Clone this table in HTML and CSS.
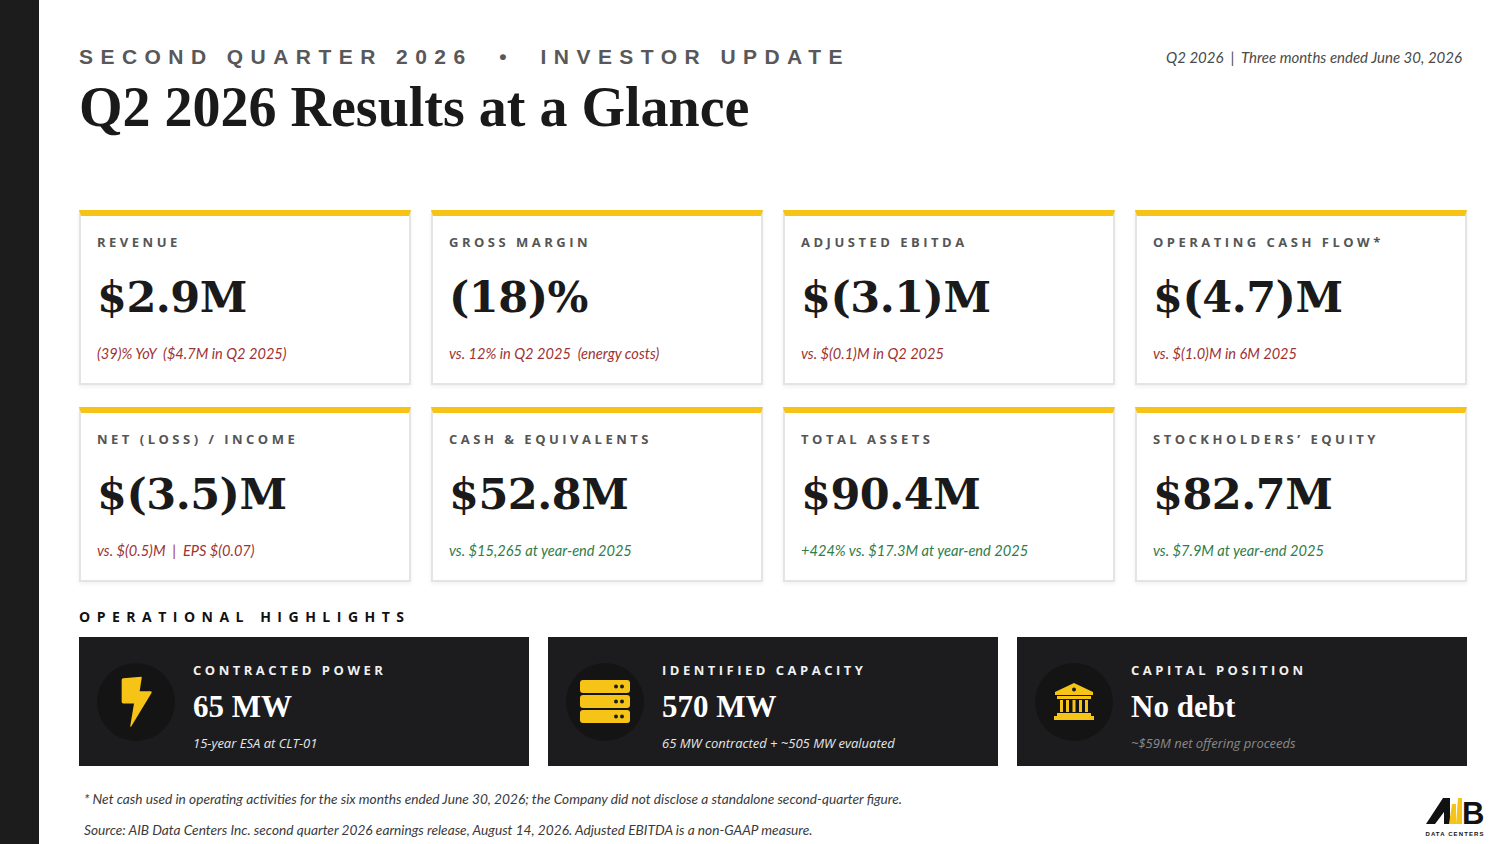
FILE: index.html
```html
<!DOCTYPE html>
<html lang="en">
<head>
<meta charset="utf-8">
<title>Q2 2026 Results at a Glance</title>
<link rel="stylesheet" href="styles.css">
</head>
<body>
<div class="slide">
  <aside class="rail"></aside>
  <main class="content">
    <header class="top">
      <div class="titles">
        <div class="kicker">SECOND QUARTER 2026 &nbsp;•&nbsp; INVESTOR UPDATE</div>
        <h1 class="title">Q2 2026 Results at a Glance</h1>
      </div>
      <div class="period">Q2 2026 &nbsp;|&nbsp; Three months ended June 30, 2026</div>
    </header>

    <section class="metrics">
      <div class="card">
        <div class="label">REVENUE</div>
        <div class="value">$2.9M</div>
        <div class="sub neg">(39)% YoY &nbsp;($4.7M in Q2 2025)</div>
      </div>
      <div class="card">
        <div class="label">GROSS MARGIN</div>
        <div class="value">(18)%</div>
        <div class="sub neg">vs. 12% in Q2 2025 &nbsp;(energy costs)</div>
      </div>
      <div class="card">
        <div class="label">ADJUSTED EBITDA</div>
        <div class="value">$(3.1)M</div>
        <div class="sub neg">vs. $(0.1)M in Q2 2025</div>
      </div>
      <div class="card">
        <div class="label">OPERATING CASH FLOW*</div>
        <div class="value">$(4.7)M</div>
        <div class="sub neg">vs. $(1.0)M in 6M 2025</div>
      </div>
      <div class="card">
        <div class="label">NET (LOSS) / INCOME</div>
        <div class="value">$(3.5)M</div>
        <div class="sub neg">vs. $(0.5)M &nbsp;| &nbsp;EPS $(0.07)</div>
      </div>
      <div class="card">
        <div class="label">CASH &amp; EQUIVALENTS</div>
        <div class="value">$52.8M</div>
        <div class="sub pos">vs. $15,265 at year-end 2025</div>
      </div>
      <div class="card">
        <div class="label">TOTAL ASSETS</div>
        <div class="value">$90.4M</div>
        <div class="sub pos">+424% vs. $17.3M at year-end 2025</div>
      </div>
      <div class="card">
        <div class="label">STOCKHOLDERS’ EQUITY</div>
        <div class="value">$82.7M</div>
        <div class="sub pos">vs. $7.9M at year-end 2025</div>
      </div>
    </section>

    <h2 class="section-title">OPERATIONAL HIGHLIGHTS</h2>

    <section class="highlights">
      <div class="hl">
        <div class="hl-icon">
          <svg width="32" height="52" viewBox="0 0 96 155" aria-hidden="true">
            <path d="M10 6 L63 2 Q66 2 65 6 L59 45 L92 45 Q97 46 94 51 L34 150 Q30 155 31 148 L42 82 L10 82 Q5 82 5 77 L5 11 Q5 6 10 6 Z" fill="#f6c417"/>
          </svg>
        </div>
        <div class="hl-text">
          <div class="hl-label">CONTRACTED POWER</div>
          <div class="hl-value">65 MW</div>
          <div class="hl-sub">15-year ESA at CLT-01</div>
        </div>
      </div>
      <div class="hl">
        <div class="hl-icon">
          <svg width="50" height="43" viewBox="0 0 50 43" aria-hidden="true">
            <rect x="0" y="0" width="50" height="13" rx="3" fill="#f6c417"/>
            <rect x="0" y="15" width="50" height="13" rx="3" fill="#f6c417"/>
            <rect x="0" y="30" width="50" height="13" rx="3" fill="#f6c417"/>
            <circle cx="36" cy="6.5" r="2" fill="#1c1c1e"/><circle cx="42" cy="6.5" r="2" fill="#1c1c1e"/>
            <circle cx="36" cy="21.5" r="2" fill="#1c1c1e"/><circle cx="42" cy="21.5" r="2" fill="#1c1c1e"/>
            <circle cx="36" cy="36.5" r="2" fill="#1c1c1e"/><circle cx="42" cy="36.5" r="2" fill="#1c1c1e"/>
          </svg>
        </div>
        <div class="hl-text">
          <div class="hl-label">IDENTIFIED CAPACITY</div>
          <div class="hl-value">570 MW</div>
          <div class="hl-sub">65 MW contracted + ~505 MW evaluated</div>
        </div>
      </div>
      <div class="hl">
        <div class="hl-icon">
          <svg width="40" height="37" viewBox="0 0 40 37" aria-hidden="true">
            <path d="M20 0 L39 9 L39 12 L1 12 L1 9 Z" fill="#f6c417"/>
            <circle cx="20" cy="6.5" r="2" fill="#1c1c1e"/>
            <rect x="3" y="13" width="34" height="3" fill="#f6c417"/>
            <rect x="6" y="17" width="3" height="12" fill="#f6c417"/>
            <rect x="12" y="17" width="3" height="12" fill="#f6c417"/>
            <rect x="18.5" y="17" width="3" height="12" fill="#f6c417"/>
            <rect x="25" y="17" width="3" height="12" fill="#f6c417"/>
            <rect x="31" y="17" width="3" height="12" fill="#f6c417"/>
            <rect x="3" y="30" width="34" height="3" fill="#f6c417"/>
            <rect x="0" y="33" width="40" height="4" fill="#f6c417"/>
          </svg>
        </div>
        <div class="hl-text">
          <div class="hl-label">CAPITAL POSITION</div>
          <div class="hl-value">No debt</div>
          <div class="hl-sub muted">~$59M net offering proceeds</div>
        </div>
      </div>
    </section>

    <footer class="notes">
      <div class="note-text">
        <p>* Net cash used in operating activities for the six months ended June 30, 2026; the Company did not disclose a standalone second-quarter figure.</p>
        <p>Source: AIB Data Centers Inc. second quarter 2026 earnings release, August 14, 2026. Adjusted EBITDA is a non-GAAP measure.</p>
      </div>
      <div class="logo">
        <svg width="64" height="42" viewBox="0 0 64 42" aria-hidden="true">
          <polygon points="4,29 21,3 28,3 28,29 22,29 22,17 13,29" fill="#111"/>
          <polygon points="30,9 34,9 34,29 27,29" fill="#f6c417"/>
          <polygon points="36,3 40,3 40,29 34,29" fill="#f6c417"/>
          <text x="40" y="29" class="logo-b">B</text>
          <text x="33" y="41" class="logo-sub" text-anchor="middle">DATA CENTERS</text>
        </svg>
      </div>
    </footer>
  </main>
</div>
</body>
</html>
```

FILE: styles.css
```css
* { box-sizing: border-box; }
html, body { margin: 0; padding: 0; }
body { background: #ffffff; color: #1a1a1a; }

.slide {
  width: 1500px;
  height: 844px;
  display: flex;
  overflow: hidden;
  background: #ffffff;
}

.rail {
  width: 39px;
  flex: 0 0 39px;
  background: #1c1c1c;
}

.content {
  flex: 1;
  padding: 42px 33px 0 40px;
  display: flex;
  flex-direction: column;
}

.top {
  display: flex;
  justify-content: space-between;
  align-items: flex-start;
  height: 168px;
  flex: 0 0 168px;
}

.kicker {
  font-family: "Liberation Sans", Arial, sans-serif;
  font-weight: 700;
  font-size: 21px;
  line-height: 30px;
  letter-spacing: 7.45px;
  color: #58585a;
}

.title {
  margin: 4px 0 0 0;
  font-family: "Liberation Serif", "Times New Roman", serif;
  font-weight: 700;
  font-size: 56px;
  line-height: 62px;
  color: #1a1a1a;
}

.period {
  font-family: Lato, "Open Sans", sans-serif;
  font-style: italic;
  font-size: 15px;
  line-height: 30px;
  color: #4a4a4a;
  margin-right: 5px;
}

.metrics {
  display: grid;
  grid-template-columns: repeat(4, 1fr);
  column-gap: 20px;
  row-gap: 22px;
  flex: 0 0 auto;
}

.card {
  height: 175px;
  border: 2px solid #e4e4e4;
  border-top: 6px solid #f6c417;
  box-shadow: 0 2px 4px rgba(0, 0, 0, 0.06);
  padding: 18px 16px 0 16px;
  display: flex;
  flex-direction: column;
}

.label {
  font-family: "Open Sans", sans-serif;
  font-weight: 700;
  font-size: 13px;
  line-height: 16px;
  letter-spacing: 3.5px;
  color: #555555;
}

.value {
  margin-top: 22px;
  font-family: "DejaVu Serif", Georgia, serif;
  font-weight: 700;
  font-size: 43px;
  line-height: 50px;
  color: #1a1a1a;
  letter-spacing: -0.5px;
}

.sub {
  margin-top: 23px;
  font-family: Lato, "Open Sans", sans-serif;
  font-style: italic;
  font-size: 14.6px;
  line-height: 18px;
}
.sub.neg { color: #9e3333; }
.sub.pos { color: #2e7d4a; }

.section-title {
  margin: 26px 0 0 0;
  font-family: "Open Sans", sans-serif;
  font-weight: 700;
  font-size: 14px;
  line-height: 18px;
  letter-spacing: 6.5px;
  color: #111111;
  flex: 0 0 auto;
}

.highlights {
  margin-top: 11px;
  display: grid;
  grid-template-columns: repeat(3, 1fr);
  column-gap: 19px;
  flex: 0 0 auto;
}

.hl {
  height: 129px;
  background: #1c1c1e;
  display: flex;
  align-items: center;
  padding: 0 18px;
  gap: 18px;
}

.hl-icon {
  width: 78px;
  height: 78px;
  flex: 0 0 78px;
  border-radius: 50%;
  background: #141415;
  display: flex;
  align-items: center;
  justify-content: center;
}

.hl-text {
  display: flex;
  flex-direction: column;
  padding-top: 10px;
}

.hl-label {
  font-family: "Open Sans", sans-serif;
  font-weight: 700;
  font-size: 13px;
  line-height: 16px;
  letter-spacing: 3.5px;
  color: #f0f0f0;
}

.hl-value {
  margin-top: 11px;
  font-family: "Liberation Serif", "Times New Roman", serif;
  font-weight: 700;
  font-size: 31px;
  line-height: 36px;
  color: #ffffff;
}

.hl-sub {
  margin-top: 9px;
  font-family: "Open Sans", sans-serif;
  font-style: italic;
  font-size: 13px;
  line-height: 18px;
  color: #e6e6e6;
}
.hl-sub.muted { color: #8a8a8a; }

.notes {
  display: flex;
  justify-content: space-between;
  align-items: flex-end;
  flex: 1 1 auto;
}

.note-text p {
  margin: 0 0 12px 5px;
  font-family: Lato, "Open Sans", sans-serif;
  font-style: italic;
  font-size: 13.7px;
  line-height: 19px;
  color: #3a3a3a;
}
.note-text p:last-child { margin-bottom: 5px; }

.logo {
  margin-right: -19px;
  margin-bottom: 3px;
}

.logo-b {
  font-family: "Liberation Sans", Arial, sans-serif;
  font-weight: 700;
  font-size: 31px;
  fill: #111111;
}

.logo-sub {
  font-family: "Liberation Sans", Arial, sans-serif;
  font-weight: 700;
  font-size: 6px;
  letter-spacing: 1.1px;
  fill: #111111;
}
```
